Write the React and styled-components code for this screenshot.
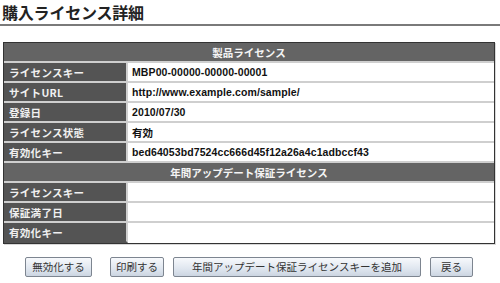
import styled, { createGlobalStyle } from "styled-components";

const GlobalStyle = createGlobalStyle`
  body {
    margin: 0;
    background: #ffffff;
    font-family: "Noto Sans CJK JP", "Liberation Sans", sans-serif;
  }
`;

const Page = styled.div`
  width: 500px;
  height: 283px;
  overflow: hidden;
  display: flex;
  flex-direction: column;
`;

const Title = styled.h1`
  margin: 0;
  padding: 1px 2px 0;
  height: 23px;
  font-size: 16px;
  line-height: 22px;
  font-weight: 700;
  color: #222;
  letter-spacing: -0.2px;
  border-bottom: 2px solid #7a7a7a;
`;

const Table = styled.table`
  margin: 16px 0 0 3px;
  width: 492px;
  border-collapse: separate;
  border-spacing: 0;
  border: 1px solid #333;
  box-shadow: 1px 1px 0 #d8d8d8;
  table-layout: fixed;
`;

const Col = styled.col`
  width: ${(p) => (p.$w ? `${p.$w}px` : "auto")};
`;

const HeadCell = styled.th`
  height: 18px;
  padding: 0;
  background: #646464;
  color: #f4f4f4;
  font-size: 10.5px;
  font-weight: 700;
  text-align: center;
  border-bottom: 2px solid #cfcfcf;
`;

const Label = styled.td`
  height: 18px;
  padding: 0 0 0 5px;
  background: #545454;
  color: #f0f0f0;
  font-size: 10.5px;
  font-weight: 700;
  letter-spacing: 0.3px;
  white-space: nowrap;
  border-bottom: 2px solid ${(p) => (p.$last ? "#545454" : "#cfcfcf")};
  border-right: 2px solid #cfcfcf;
`;

const Value = styled.td`
  height: 18px;
  padding: 0 0 0 4px;
  background: #ffffff;
  color: #111;
  font-family: "Liberation Sans", "Noto Sans CJK JP", sans-serif;
  font-size: 10.5px;
  font-weight: 700;
  letter-spacing: 0.1px;
  white-space: nowrap;
  border-bottom: 2px solid ${(p) => (p.$last ? "#ffffff" : "#cfcfcf")};
`;

const Buttons = styled.div`
  display: flex;
  gap: 9px;
  margin-top: 13px;
  padding-left: 25px;
`;

const Button = styled.button`
  width: ${(p) => p.$w}px;
  height: 20px;
  margin-right: ${(p) => p.$extra || 0}px;
  padding: 0;
  border: 1px solid #7d8590;
  border-radius: 2px;
  background: linear-gradient(#f7f9fc, #dfe6ef 60%, #ccd5e1);
  color: #333;
  font-family: "Noto Sans CJK JP", sans-serif;
  font-size: 10.5px;
  line-height: 18px;
  cursor: pointer;
`;

const product = [
  ["ライセンスキー", "MBP00-00000-00000-00001"],
  ["サイトURL", "http://www.example.com/sample/"],
  ["登録日", "2010/07/30"],
  ["ライセンス状態", "有効"],
  ["有効化キー", "bed64053bd7524cc666d45f12a26a4c1adbccf43"],
];

const warranty = ["ライセンスキー", "保証満了日", "有効化キー"];

const App = () => (
  <>
    <GlobalStyle />
    <Page>
      <Title>購入ライセンス詳細</Title>
      <Table>
        <colgroup>
          <Col $w={124} />
          <Col />
        </colgroup>
        <tbody>
          <tr>
            <HeadCell colSpan={2}>製品ライセンス</HeadCell>
          </tr>
          {product.map(([k, v]) => (
            <tr key={k}>
              <Label>{k}</Label>
              <Value>{v}</Value>
            </tr>
          ))}
          <tr>
            <HeadCell colSpan={2}>年間アップデート保証ライセンス</HeadCell>
          </tr>
          {warranty.map((k, i) => (
            <tr key={k}>
              <Label $last={i === warranty.length - 1}>{k}</Label>
              <Value $last={i === warranty.length - 1} />
            </tr>
          ))}
        </tbody>
      </Table>
      <Buttons>
        <Button $w={67} $extra={9}>無効化する</Button>
        <Button $w={54}>印刷する</Button>
        <Button $w={248}>年間アップデート保証ライセンスキーを追加</Button>
        <Button $w={43}>戻る</Button>
      </Buttons>
    </Page>
  </>
);

export default App;
